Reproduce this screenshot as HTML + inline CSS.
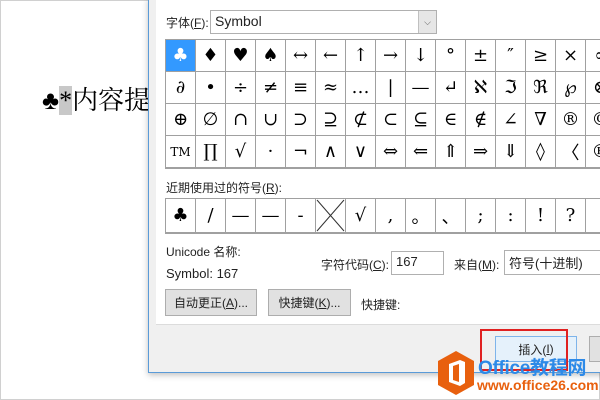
<!DOCTYPE html>
<html><head><meta charset="utf-8"><style>
*{margin:0;padding:0;box-sizing:border-box}
body{width:600px;height:400px;overflow:hidden;background:#fff;font-family:"Liberation Sans","Noto Sans CJK SC",sans-serif;position:relative}
.abs{position:absolute}
.frame{left:0;top:0;width:600px;height:400px;border:1px solid #d0d0d0}
.doc{left:42px;top:80px;font-family:"Liberation Serif","Noto Serif CJK SC",serif;font-size:26px;color:#000;white-space:nowrap}
.dlg{left:148px;top:-2px;width:460px;height:375px;background:#f0f0f0;border:1px solid #5a9bd8;box-shadow:0 2px 6px rgba(0,0,0,.25)}
.panel{left:156px;top:0;width:450px;height:325px;background:#fff;border-bottom:1px solid #dcdcdc}
.t{font-size:12px;color:#222;white-space:nowrap}
.grid{left:165px;top:39px;border:1px solid #a0a0a0;background:#fff}
.row{display:flex}
.c{width:30px;height:32px;border-right:1px solid #a0a0a0;border-bottom:1px solid #a0a0a0;display:flex;align-items:center;justify-content:center;font-family:"DejaVu Serif","Liberation Serif",serif;font-size:18px;color:#000;flex:none}
.btn{background:#e1e1e1;border:1px solid #adadad;font-size:12px;display:flex;align-items:center;justify-content:center;color:#222}
.inp{background:#fff;border:1px solid #b0b0b0;font-size:13px;padding:2px 4px;color:#222}
</style></head><body>
<div class="abs frame"></div>
<div class="abs doc">♣<span style="background:#c8c8c8">*</span>内容提</div>
<div class="abs dlg"></div>
<div class="abs panel"></div>
<div class="abs t" style="left:166px;top:14px">字体(<u>F</u>):</div>
<div class="abs inp" style="left:210px;top:10px;width:227px;height:24px;font-size:14px;padding-top:2px">Symbol</div>
<div class="abs" style="left:418px;top:11px;width:18px;height:22px;background:#e6e6e6;border-left:1px solid #c0c0c0;font-size:9px;color:#555;text-align:center;line-height:22px">⌵</div>

<div class="abs grid">
<div class="row"><div class="c" style="background:#3399ff;color:#fff">♣</div><div class="c">♦</div><div class="c">♥</div><div class="c">♠</div><div class="c">↔</div><div class="c">←</div><div class="c">↑</div><div class="c">→</div><div class="c">↓</div><div class="c">°</div><div class="c">±</div><div class="c">″</div><div class="c">≥</div><div class="c">×</div><div class="c">∝</div></div>
<div class="row"><div class="c">∂</div><div class="c">•</div><div class="c">÷</div><div class="c">≠</div><div class="c">≡</div><div class="c">≈</div><div class="c">…</div><div class="c">|</div><div class="c">—</div><div class="c">↵</div><div class="c">ℵ</div><div class="c">ℑ</div><div class="c">ℜ</div><div class="c">℘</div><div class="c">⊗</div></div>
<div class="row"><div class="c">⊕</div><div class="c">∅</div><div class="c">∩</div><div class="c">∪</div><div class="c">⊃</div><div class="c">⊇</div><div class="c">⊄</div><div class="c">⊂</div><div class="c">⊆</div><div class="c">∈</div><div class="c">∉</div><div class="c">∠</div><div class="c">∇</div><div class="c">®</div><div class="c">©</div></div>
<div class="row"><div class="c" style="font-size:12px">TM</div><div class="c">∏</div><div class="c">√</div><div class="c">·</div><div class="c">¬</div><div class="c">∧</div><div class="c">∨</div><div class="c">⇔</div><div class="c">⇐</div><div class="c">⇑</div><div class="c">⇒</div><div class="c">⇓</div><div class="c">◊</div><div class="c">〈</div><div class="c">®</div></div>
</div>

<div class="abs t" style="left:166px;top:179px">近期使用过的符号(<u>R</u>):</div>
<div class="abs grid" style="top:198px">
<div class="row"><div class="c" style="height:34px">♣</div><div class="c" style="height:34px">/</div><div class="c" style="height:34px">—</div><div class="c" style="height:34px">—</div><div class="c" style="height:34px">-</div><div class="c" style="height:34px"><svg width="29" height="33"><path d="M1 1 L28 32 M28 1 L1 32" stroke="#333" stroke-width="1"/></svg></div><div class="c" style="height:34px">√</div><div class="c" style="height:34px">,</div><div class="c" style="height:34px">。</div><div class="c" style="height:34px">、</div><div class="c" style="height:34px">;</div><div class="c" style="height:34px">:</div><div class="c" style="height:34px">!</div><div class="c" style="height:34px">?</div><div class="c" style="height:34px"></div></div>
</div>

<div class="abs t" style="left:166px;top:243px">Unicode 名称:</div>
<div class="abs t" style="left:166px;top:266px;font-size:13px">Symbol: 167</div>
<div class="abs t" style="left:321px;top:256px">字符代码(<u>C</u>):</div>
<div class="abs inp" style="left:391px;top:251px;width:53px;height:24px">167</div>
<div class="abs t" style="left:454px;top:256px">来自(<u>M</u>):</div>
<div class="abs inp" style="left:504px;top:250px;width:100px;height:25px">符号(十进制)</div>

<div class="abs btn" style="left:165px;top:289px;width:92px;height:27px">自动更正(<u>A</u>)...</div>
<div class="abs btn" style="left:268px;top:289px;width:83px;height:27px">快捷键(<u>K</u>)...</div>
<div class="abs t" style="left:361px;top:296px">快捷键:</div>

<div class="abs btn" style="left:495px;top:336px;width:82px;height:26px;background:#e5f1fb;border-color:#7eb4ea">插入(<u>I</u>)</div>
<div class="abs btn" style="left:589px;top:336px;width:20px;height:26px"></div>
<div class="abs" style="left:480px;top:329px;width:88px;height:42px;border:2px solid #e02020"></div>

<svg class="abs" style="left:436px;top:350px" width="40" height="46" viewBox="0 0 40 46"><polygon points="20,1 38,11 38,35 20,45 2,35 2,11" fill="#e8600e"/><path d="M13 14 L24 10 L29 12 V33 L24 36 L13 32 Z M17 16 V30 L23 32 V14 Z" fill="#fff" fill-rule="evenodd"/></svg>
<div class="abs" style="left:478px;top:353px;font-size:19px;font-weight:bold;color:#2d8ae8;white-space:nowrap;letter-spacing:-0.3px">Office教程网</div>
<div class="abs" style="left:477px;top:377px;font-size:14px;font-weight:bold;color:#e8600e;white-space:nowrap">www.office26.com</div>
</body></html>
